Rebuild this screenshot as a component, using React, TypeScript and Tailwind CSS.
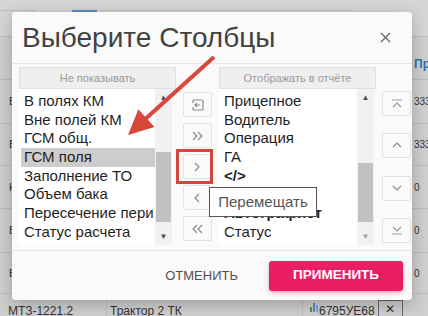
import React from 'react'

const leftItems = [
  'В полях КМ',
  'Вне полей КМ',
  'ГСМ общ.',
  'ГСМ поля',
  'Заполнение ТО',
  'Объем бака',
  'Пересечение пери',
  'Статус расчета',
]

const rightItems: { label: string; bold?: boolean }[] = [
  { label: 'Прицепное' },
  { label: 'Водитель' },
  { label: 'Операция' },
  { label: 'ГА' },
  { label: '</>', bold: true },
  { label: 'Агрегат' },
  { label: 'Автографист', bold: true },
  { label: 'Статус' },
]

function Chevron({ dir }: { dir: 'left' | 'right' | 'up' | 'down' }) {
  const d = {
    right: 'M2 1 L6 5 L2 9',
    left: 'M6 1 L2 5 L6 9',
    up: 'M1 6 L5 2 L9 6',
    down: 'M1 3 L5 7 L9 3',
  }[dir]
  return (
    <svg width="10" height="10" viewBox="0 0 10 10" fill="none" stroke="#8a8a8a" strokeWidth="1.2">
      <path d={d} />
    </svg>
  )
}

function Double({ dir }: { dir: 'left' | 'right' }) {
  const d = dir === 'right' ? 'M1 1 L5 5 L1 9 M6 1 L10 5 L6 9' : 'M5 1 L1 5 L5 9 M10 1 L6 5 L10 9'
  return (
    <svg width="11" height="10" viewBox="0 0 11 10" fill="none" stroke="#8a8a8a" strokeWidth="1.2">
      <path d={d} />
    </svg>
  )
}

function SmallBtn({ children }: { children: React.ReactNode }) {
  return (
    <div className="w-[29px] h-[25px] flex items-center justify-center bg-[#fafafa] border border-[#e2e2e2] rounded-[2px]">
      {children}
    </div>
  )
}

function Scrollbar({ thumbTop, thumbHeight, downDim }: { thumbTop: number; thumbHeight: number; downDim?: boolean }) {
  return (
    <div className="w-[17px] h-full bg-[#f1f1f1] flex flex-col items-center">
      <div className="h-[17px] flex items-center justify-center text-[8px] leading-none text-[#505050]">▲</div>
      <div className="flex-1 w-full relative">
        <div className="absolute left-[1px] right-[1px] bg-[#c1c1c1]" style={{ top: thumbTop, height: thumbHeight }} />
      </div>
      <div className={`h-[17px] flex items-center justify-center text-[8px] leading-none ${downDim ? 'text-[#a3a3a3]' : 'text-[#505050]'}`}>▼</div>
    </div>
  )
}

function BgRow({ left, right, h }: { left: string; right: string; h: string }) {
  return (
    <div className={`${h} border-t border-[#bdbdbd] flex items-center justify-between text-[11px] text-[#333]`}>
      <span className="pl-[9px]">{left}</span>
      <span className="w-[14px] text-[10px] overflow-hidden">{right}</span>
    </div>
  )
}

export default function App() {
  return (
    <div className="relative w-[428px] h-[316px] overflow-hidden bg-[#cfcfcf] font-['Liberation_Sans',Arial,sans-serif]">
      {/* dimmed page underneath */}
      <div className="flex flex-col">
        <div className="h-[36px] bg-[#d6d6d6] pt-[10px] flex">
          <div className="w-[37px] h-px bg-[#c2c2c2]" />
          <div className="ml-[35px] w-[25px] h-[2px] bg-[#5b8cc4]" />
          <div className="ml-[3px] w-[250px] h-px bg-[#c2c2c2]" />
        </div>
        <div className="h-[43px] border-t border-[#bdbdbd] flex justify-end items-end pb-[6px]">
          <span className="w-[14px] text-[12px] font-bold text-[#2f6fb0] overflow-hidden">Пр</span>
        </div>
        <BgRow h="h-[44px]" left="В" right="333" />
        <BgRow h="h-[42px]" left="В" right="333" />
        <BgRow h="h-[43px]" left="К" right="0" />
        <BgRow h="h-[44px]" left="В" right="0" />
        <BgRow h="h-[41px]" left="В" right="0" />
        <div className="h-[30px] border-t border-[#bdbdbd] flex text-[12px] text-[#333]">
          <div className="w-[107px] pl-[8px] pt-[8px] border-r border-[#bdbdbd]">МТЗ-1221.2</div>
          <div className="w-[196px] pl-[3px] pt-[8px] border-r border-[#bdbdbd]">Трактор 2 ТК</div>
          <div className="flex items-start pt-[6px] pl-[6px]">
            <svg width="10" height="12" viewBox="0 0 10 12">
              <rect x="1" y="7" width="2" height="5" fill="#4a9a4a" />
              <rect x="4" y="3" width="2" height="9" fill="#5b8cc4" />
              <rect x="7" y="5" width="2" height="7" fill="#7aa7d6" />
            </svg>
            <span className="pt-[2px]">6795УЕ68</span>
            <div className="ml-[3px] w-[25px] h-[18px] border border-[#666] flex items-center justify-center text-[12px]">✕</div>
          </div>
        </div>
      </div>

      {/* dialog */}
      <div className="absolute left-[12px] top-[12px] w-[400px] h-[288px] bg-[#fafafa] rounded-[3px] shadow-[0_4px_16px_rgba(0,0,0,0.25)] flex flex-col">
        <div className="h-[52px] border-b border-[#e6e6e6] flex items-center justify-between pl-[10px] pr-[21px]">
          <span className="text-[28px] text-[#424242] leading-none">Выберите Столбцы</span>
          <svg width="11" height="11" viewBox="0 0 11 11" stroke="#666" strokeWidth="1.3">
            <path d="M1 1 L10 10 M10 1 L1 10" />
          </svg>
        </div>

        <div className="flex pl-[7px] pt-[3px] h-[182px]">
          {/* not shown */}
          <div className="w-[157px] flex flex-col">
            <div className="h-[22px] bg-[#efefef] border border-[#e0e0e0] flex items-center justify-center text-[11px] text-[#9a9a9a]">
              Не показывать
            </div>
            <div className="w-[153px] h-[156px] bg-white flex">
              <div className="flex-1 pt-[3px] pl-[2px] text-[15px] text-[#1f1f1f] overflow-hidden">
                {leftItems.map((t, i) => (
                  <div key={t} className={`h-[18.7px] leading-[18.7px] pl-[3px] whitespace-nowrap overflow-hidden ${i === 3 ? 'bg-[#cdcdcd]' : ''}`}>
                    {t}
                  </div>
                ))}
              </div>
              <Scrollbar thumbTop={46} thumbHeight={70} />
            </div>
          </div>

          {/* move buttons */}
          <div className="w-[43px] flex flex-col items-center pt-[25px] gap-[6px]">
            <SmallBtn>
              <svg width="13" height="12" viewBox="0 0 13 12" fill="none" stroke="#8a8a8a" strokeWidth="1.2">
                <path d="M3 1 H11 a1 1 0 0 1 1 1 V10 a1 1 0 0 1 -1 1 H3 a1 1 0 0 1 -1 -1 V8" />
                <path d="M2 4 V2 a1 1 0 0 1 1 -1" />
                <path d="M9 6 H4 M6 4 L4 6 L6 8" />
              </svg>
            </SmallBtn>
            <SmallBtn><Double dir="right" /></SmallBtn>
            <SmallBtn><Chevron dir="right" /></SmallBtn>
            <SmallBtn><Chevron dir="left" /></SmallBtn>
            <SmallBtn><Double dir="left" /></SmallBtn>
          </div>

          {/* shown */}
          <div className="w-[157px] flex flex-col">
            <div className="h-[22px] bg-[#efefef] border border-[#e0e0e0] flex items-center justify-center text-[11px] text-[#9a9a9a]">
              Отображать в отчёте
            </div>
            <div className="w-[155px] h-[156px] bg-white flex">
              <div className="flex-1 pt-[3px] pl-[2px] text-[15px] text-[#1f1f1f] overflow-hidden">
                {rightItems.map((t) => (
                  <div key={t.label} className={`h-[18.7px] leading-[18.7px] pl-[3px] whitespace-nowrap ${t.bold ? 'font-bold' : ''}`}>
                    {t.label}
                  </div>
                ))}
              </div>
              <Scrollbar thumbTop={57} thumbHeight={59} downDim />
            </div>
          </div>

          {/* order buttons */}
          <div className="ml-[6px] pt-[24px] pb-[3px] flex flex-col justify-between">
            <SmallBtn>
              <svg width="12" height="10" viewBox="0 0 12 10" fill="none" stroke="#999" strokeWidth="1.2">
                <path d="M1 1 H11 M2 8 L6 4 L10 8" />
              </svg>
            </SmallBtn>
            <SmallBtn><Chevron dir="up" /></SmallBtn>
            <SmallBtn><Chevron dir="down" /></SmallBtn>
            <SmallBtn>
              <svg width="12" height="10" viewBox="0 0 12 10" fill="none" stroke="#999" strokeWidth="1.2">
                <path d="M2 2 L6 6 L10 2 M1 9 H11" />
              </svg>
            </SmallBtn>
          </div>
        </div>

        <div className="mt-[4px] border-t border-[#e6e6e6] flex-1 flex items-center justify-end pr-[9px] gap-[31px]">
          <span className="text-[13px] text-[#505050]">ОТМЕНИТЬ</span>
          <div className="w-[134px] h-[30px] bg-[#e91e63] rounded-[3px] shadow-[0_2px_4px_rgba(0,0,0,0.25)] flex items-center justify-center text-[13.5px] font-bold text-white">
            ПРИМЕНИТЬ
          </div>
        </div>
      </div>

      {/* annotation: highlight box */}
      <div className="absolute left-[176px] top-[149px] w-[37px] h-[35px] border-[3px] border-[#d2473c]" />

      {/* annotation: arrow */}
      <svg className="absolute left-0 top-0 pointer-events-none" width="428" height="316">
        <line x1="214" y1="57" x2="142" y2="122" stroke="#d9473b" strokeWidth="4" />
        <polygon points="128,135 138.4,109.3 154.5,127.1" fill="#d9473b" />
      </svg>

      {/* tooltip */}
      <div className="absolute left-[209px] top-[187px] w-[108px] h-[30px] bg-white border border-[#555] flex items-center justify-center text-[15px] text-[#555]">
        Перемещать
      </div>
    </div>
  )
}
